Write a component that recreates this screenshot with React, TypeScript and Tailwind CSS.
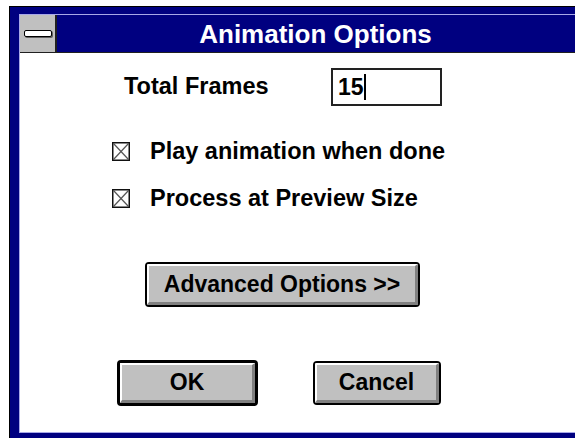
const font = { fontFamily: '"Liberation Sans", Arial, sans-serif' }

// Win 3.1 push button: black rim, white bevel top-left, grey bevel bottom-right
const Button = ({ label, width, height, isDefault }: { label: string; width: string; height: string; isDefault?: boolean }) => (
  <div className={`${width} ${height} ${isDefault ? "border-[3px]" : "border-2"} border-black rounded-[4px] overflow-hidden`}>
    <div className="h-full bg-[#c0c0c0] border-t-2 border-l-2 border-white border-b-[3px] border-r-[3px] border-b-[#808080] border-r-[#808080] flex items-center justify-center">
      <span className="text-[23px] font-bold text-black leading-none">{label}</span>
    </div>
  </div>
)

const CheckRow = ({ label, className }: { label: string; className: string }) => (
  <div className={`flex items-center gap-[20px] ml-[92px] h-[19px] ${className}`}>
    <svg width="18" height="19" viewBox="0 0 18 19" className="shrink-0 block">
      <rect x="0.75" y="0.75" width="16.5" height="17.5" fill="white" stroke="#111" strokeWidth="1.5" />
      <line x1="1.5" y1="1.5" x2="16.5" y2="17.5" stroke="#555" strokeWidth="1.2" />
      <line x1="16.5" y1="1.5" x2="1.5" y2="17.5" stroke="#555" strokeWidth="1.2" />
    </svg>
    <span className="text-[23.5px] font-bold text-black leading-none whitespace-nowrap">{label}</span>
  </div>
)

export default function App() {
  return (
    <div className="w-[575px] h-[438px] bg-white overflow-hidden pl-[9px] pt-[6px]" style={font}>
      <div className="w-[640px] border-l border-t border-black">
        {/* active window frame */}
        <div className="border-l-[9px] border-t-[7px] border-b-[8px] border-[#000080]">
          <div className="h-[419px] border-l border-t border-b border-[#a8a8e8] bg-white flex flex-col">
            {/* caption bar */}
            <div className="h-[38px] shrink-0 flex border-b border-[#202020] bg-[#000080]">
              <div className="w-[37px] h-full bg-[#c0c0c0] border-r-2 border-[#202020] flex items-center justify-center">
                <div className="w-[28px] h-[7px] bg-white border border-black rounded-[2px] shadow-[1px_1px_0_#606060]" />
              </div>
              <div className="w-[517px] flex items-center justify-center">
                <span className="text-white font-bold text-[26px] leading-none">Animation Options</span>
              </div>
            </div>

            <div className="flex flex-col pt-[15px]">
              <div className="flex items-center h-[38px]">
                <span className="ml-[104px] w-[207px] text-[23.5px] font-bold text-black leading-none">Total Frames</span>
                <div className="w-[111px] h-[38px] border-2 border-[#222] bg-white flex items-center pl-[5px]">
                  <span className="text-[23px] font-bold text-black leading-none">15</span>
                  <span className="w-[2px] h-[26px] bg-black" />
                </div>
              </div>

              <CheckRow label="Play animation when done" className="mt-[36px]" />
              <CheckRow label="Process at Preview Size" className="mt-[28px]" />

              <div className="ml-[125px] mt-[54px]">
                <Button label="Advanced Options >>" width="w-[275px]" height="h-[45px]" />
              </div>

              <div className="flex items-center ml-[97px] mt-[53px] gap-[55px]">
                <Button label="OK" width="w-[141px]" height="h-[46px]" isDefault />
                <Button label="Cancel" width="w-[128px]" height="h-[44px]" />
              </div>
            </div>
          </div>
        </div>
      </div>
    </div>
  )
}
